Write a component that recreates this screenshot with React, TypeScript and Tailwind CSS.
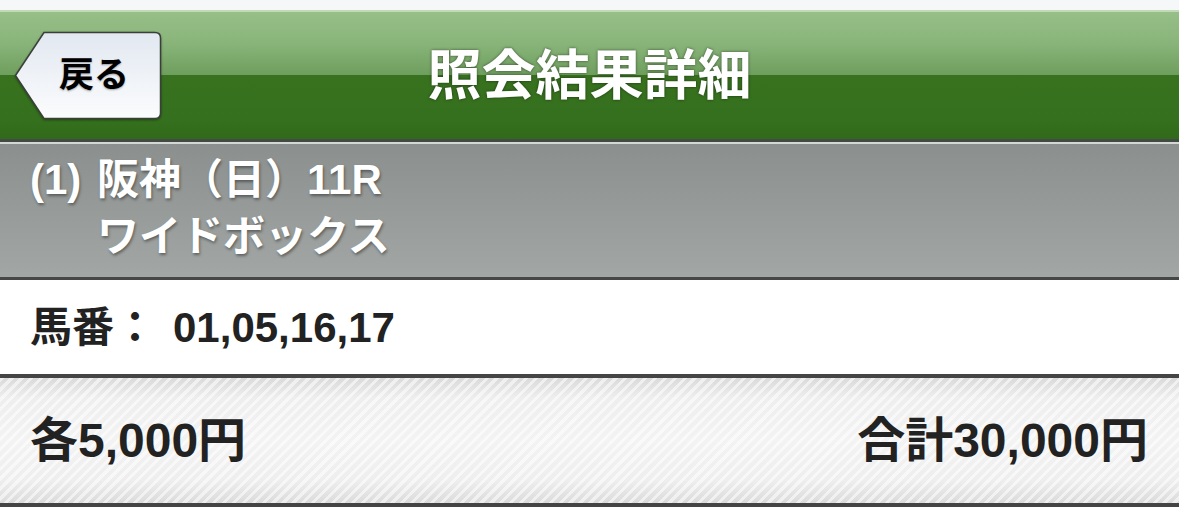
import React from "react";

const jp = { fontFamily: '"Liberation Sans", "Noto Sans CJK JP", sans-serif' };

function BackButton() {
  return (
    <button className="relative ml-[14px] flex h-[89px] w-[148px] items-center pl-[45px] text-left">
      <svg
        className="absolute inset-0 h-full w-full drop-shadow-[0_1px_1px_rgba(0,0,0,0.35)]"
        viewBox="0 0 148 89"
        fill="none"
      >
        <defs>
          <linearGradient id="backFill" x1="0" y1="0" x2="0" y2="1">
            <stop offset="0%" stopColor="#e2e8f1" />
            <stop offset="100%" stopColor="#fbfcfd" />
          </linearGradient>
        </defs>
        <path
          d="M1.5 44.5 L30 1.5 H141 Q146.5 1.5 146.5 7 V82 Q146.5 87.5 141 87.5 H30 Z"
          fill="url(#backFill)"
          stroke="#3b3f3a"
          strokeWidth="1.5"
        />
      </svg>
      <span
        className="relative text-[35px] font-bold text-black [text-shadow:0_1px_2px_rgba(0,0,0,0.35)]"
        style={jp}
      >
        戻る
      </span>
    </button>
  );
}

export default function App() {
  return (
    <div className="min-h-[521px] w-full bg-white" style={jp}>
      <div className="h-[10px] bg-[#f6f7f8]" />

      <header className="grid h-[129px] grid-cols-[1fr_auto_1fr] items-center border-t-2 border-[#c3dbb5] bg-[linear-gradient(to_bottom,#97bf89_0%,#88b479_25%,#6e9e5d_50%,#38721f_50%,#35701e_85%,#306a1a_100%)]">
        <div className="flex items-center">
          <BackButton />
        </div>
        <h1 className="text-[54px] font-bold leading-none text-white [text-shadow:0_0_3px_rgba(0,0,0,0.55)]">
          照会結果詳細
        </h1>
        <div />
      </header>

      <div className="h-[3px] bg-[#434a43]" />

      <section className="flex h-[135px] border-t-2 border-[#d3d7d6] bg-[linear-gradient(to_bottom,#8b908e,#a2a7a5)] pl-[30px] pt-[7px] text-[42px] font-bold leading-[57px] text-white [text-shadow:1px_2px_3px_rgba(0,0,0,0.4)]">
        <div className="w-[67px]">(1)</div>
        <div>
          <div>阪神（日）11R</div>
          <div>ワイドボックス</div>
        </div>
      </section>

      <div className="h-[3px] bg-[#444746]" />

      <section className="flex h-[94px] items-center pl-[30px] text-[42px] font-bold text-[#222]">
        <span>馬番：</span>
        <span className="ml-[17px]">01,05,16,17</span>
      </section>

      <div className="h-[4px] bg-[#454545]" />

      <section className="h-[125px] bg-[linear-gradient(to_bottom,#dadada,#eeeeee_16%,#f3f3f3_50%,#eeeeee_82%,#dbdbdb)]">
        <div className="flex h-full items-center justify-between bg-[repeating-linear-gradient(135deg,rgba(255,255,255,0.55)_0px,rgba(255,255,255,0.55)_3px,rgba(255,255,255,0)_3px,rgba(255,255,255,0)_7px)] pl-[30px] pr-[31px] text-[48px] font-bold text-[#222]">
          <span>各5,000円</span>
          <span>合計30,000円</span>
        </div>
      </section>

      <div className="h-[4px] bg-[#454545]" />
    </div>
  );
}
